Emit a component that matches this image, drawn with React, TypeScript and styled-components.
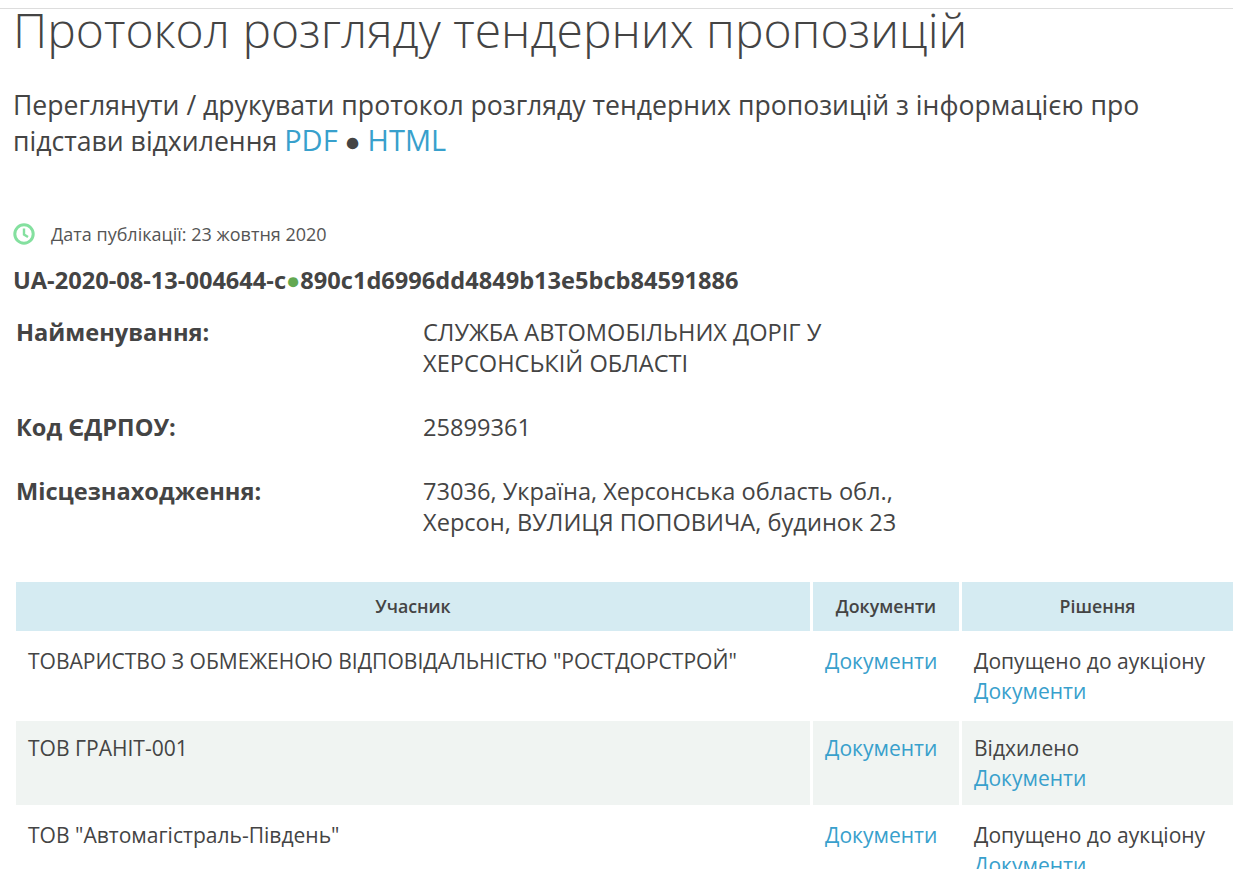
import * as React from "react";
import styled, { createGlobalStyle } from "styled-components";

const Global = createGlobalStyle`
  html, body {
    margin: 0;
    padding: 0;
    background: #fff;
    overflow: hidden;
    height: 869px;
  }
  body {
    font-family: "Open Sans", "Noto Sans", sans-serif;
    color: #444;
  }
`;

const Page = styled.div`
  border-top: 1px solid #ddd;
  margin-top: 8px;
  padding-left: 13px;
`;

const Title = styled.h1`
  margin: 0;
  font-size: 48px;
  font-weight: 300;
  line-height: 42px;
  color: #444;
`;

const Subtitle = styled.p`
  margin: 36px 0 0;
  font-size: 26.6px;
  line-height: 36px;
  color: #444;
  max-width: 1190px;
`;

const A = styled.a`
  color: #38a0cc;
`;

const BigLink = styled(A)`
  font-size: 29px;
  line-height: 1;
`;

const Published = styled.div`
  display: flex;
  align-items: center;
  gap: 16px;
  margin-top: 63px;
  font-size: 18px;
  line-height: 24px;
  color: #555;
`;

const ClockIcon = styled.svg`
  flex: none;
  width: 22px;
  height: 22px;
  fill: none;
  stroke: #84e09f;
`;

const Code = styled.div`
  margin-top: 19px;
  font-size: 23.6px;
  font-weight: 700;
  line-height: 30px;
  color: #444;
`;

const Dot = styled.span`
  color: #62a851;
`;

const Info = styled.div`
  margin: 22px 0 0 3px;
  display: grid;
  grid-template-columns: 407px 490px;
  row-gap: 33px;
  font-size: 23.6px;
  line-height: 31px;
`;

const Label = styled.div`
  font-weight: 700;
`;

const Table = styled.div`
  margin: 44px 0 0 3px;
  display: grid;
  grid-template-columns: 794px 146px 1fr;
  gap: 3px;
  width: 1217px;
`;

const Head = styled.div`
  box-sizing: border-box;
  height: 49px;
  padding-bottom: 2px;
  display: flex;
  align-items: center;
  justify-content: center;
  background: #d5ebf2;
  font-size: 17.8px;
  font-weight: 600;
`;

const Cell = styled.div<{ $shade?: boolean }>`
  box-sizing: border-box;
  height: 84px;
  padding: 12px 12px 0;
  font-size: 21.05px;
  line-height: 30px;
  background: ${(p) => (p.$shade ? "#f0f4f2" : "#fff")};
`;

const rows = [
  { name: 'ТОВАРИСТВО З ОБМЕЖЕНОЮ ВІДПОВІДАЛЬНІСТЮ "РОСТДОРСТРОЙ"', status: "Допущено до аукціону", shade: false },
  { name: "ТОВ ГРАНІТ-001", status: "Відхилено", shade: true },
  { name: 'ТОВ "Автомагістраль-Південь"', status: "Допущено до аукціону", shade: false },
];

export default function App() {
  return (
    <Page>
      <Global />
      <Title>Протокол розгляду тендерних пропозицій</Title>
      <Subtitle>
        Переглянути / друкувати протокол розгляду тендерних пропозицій з інформацією про підстави відхилення{" "}
        <BigLink>PDF</BigLink> ● <BigLink>HTML</BigLink>
      </Subtitle>
      <Published>
        <ClockIcon viewBox="0 0 22 22" strokeWidth="3">
          <circle cx="11" cy="11" r="9.2" />
          <path d="M11 5.5V11.5L15 14" strokeWidth="2.4" />
        </ClockIcon>
        Дата публікації: 23 жовтня 2020
      </Published>
      <Code>
        UA-2020-08-13-004644-c<Dot>●</Dot>890c1d6996dd4849b13e5bcb84591886
      </Code>
      <Info>
        <Label>Найменування:</Label>
        <div>СЛУЖБА АВТОМОБІЛЬНИХ ДОРІГ У ХЕРСОНСЬКІЙ ОБЛАСТІ</div>
        <Label>Код ЄДРПОУ:</Label>
        <div>25899361</div>
        <Label>Місцезнаходження:</Label>
        <div>73036, Україна, Херсонська область обл., Херсон, ВУЛИЦЯ ПОПОВИЧА, будинок 23</div>
      </Info>
      <Table>
        <Head>Учасник</Head>
        <Head>Документи</Head>
        <Head>Рішення</Head>
        {rows.map((r) => (
          <React.Fragment key={r.name}>
            <Cell $shade={r.shade}>{r.name}</Cell>
            <Cell $shade={r.shade}><A>Документи</A></Cell>
            <Cell $shade={r.shade}>
              {r.status}
              <br />
              <A>Документи</A>
            </Cell>
          </React.Fragment>
        ))}
      </Table>
    </Page>
  );
}
